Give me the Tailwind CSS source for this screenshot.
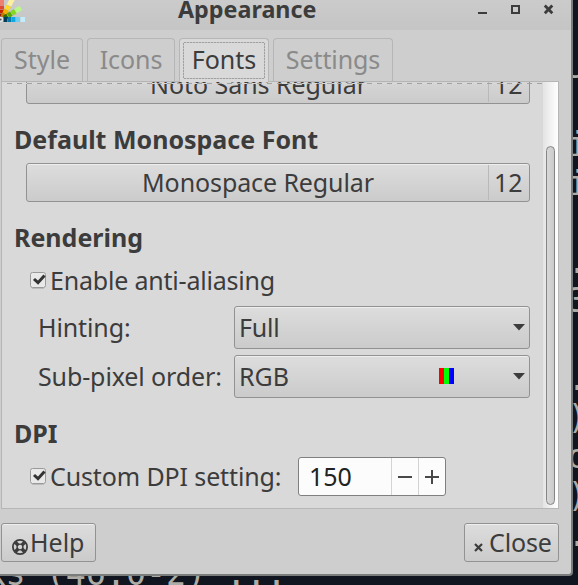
<!DOCTYPE html>
<html lang="en">
<head>
<meta charset="utf-8">
<title>Appearance</title>
<script src="https://cdn.jsdelivr.net/npm/@tailwindcss/browser@4"></script>
</head>
<body class="relative w-[578px] h-[585px] overflow-hidden bg-[#10151f] text-[#3c3c3c] text-[25px] leading-[34px] font-['Noto_Sans',sans-serif] whitespace-nowrap">

<!-- Terminal behind the window -->
<div class="absolute inset-0 overflow-hidden font-['DejaVu_Sans_Mono','Liberation_Mono',monospace] text-[#aeaca6] text-[33.33px] leading-[39px]">
  <div class="absolute left-[567.5px] top-[47px] whitespace-pre"><span class="inline-block align-top h-[39px] [clip-path:inset(50%_0_0_0)]">J</span>

i
i

.
3

.
)
o
)
.</div>
  <span class="absolute left-[-14.5px] top-[554px] whitespace-pre">ks (46.0-2) ...</span>
</div>

<!-- Window -->
<div class="relative flex flex-col w-[573px] h-[576px] bg-[#cecece] border-r-2 border-b-2 border-[#7b7c7c] rounded-br-[4px] overflow-hidden">
  <header class="relative flex shrink-0 h-[30px] bg-linear-to-b from-[#cbcbcb] to-[#c5c5c5]">
    <svg class="absolute left-0 top-0" width="26" height="24" viewBox="0 0 26 24">
      <g transform="translate(1.5 19.5)">
        <g transform="rotate(-90)"><path fill="#8c1a00" d="M3 -2.5h3v5h-3z"/><path fill="#c62000" d="M6.500 -2.5h3.500v5h-3.500z"/><path fill="#e24a30" d="M10.500 -2.5h3.500v5h-3.500z"/><path fill="#ee8070" d="M14.500 -2.5h6v5h-6z"/></g>
        <g transform="rotate(-62)"><path fill="#c88000" d="M3 -2.5h4v5h-4z"/><path fill="#f0b400" d="M7 -2.5h4v5h-4z"/><path fill="#ffd820" d="M11.500 -2.5h4v5h-4z"/><path fill="#fbf0a0" d="M16 -2.5h8v5h-8z"/></g>
        <g transform="rotate(-31)"><path fill="#2c7000" d="M3 -2.5h4v5h-4z"/><path fill="#58a800" d="M7.500 -2.5h4v5h-4z"/><path fill="#84d820" d="M12 -2.5h4v5h-4z"/><path fill="#b8f888" d="M16.500 -2.5h6v5h-6z"/></g>
        <path fill="#003c58" d="M2 -2.500h4v5h-4z"/><path fill="#0878a8" d="M6.500 -2.500h3.500v5h-3.500z"/><path fill="#10a8e0" d="M10.500 -2.500h3.500v5h-3.500z"/><path fill="#70ccf0" d="M14.500 -2.500h4v5h-4z"/><path fill="#c0ecfc" d="M19 -2.500h4.500v5h-4.500z"/>
        <circle r="2.400" cx="-.8" fill="#e8e8e8"/><circle r="1" cx="-.8" fill="#555"/>
      </g>
    </svg>
    <h1 class="ml-[178px] mt-[-8px] font-bold text-[23.3px]">Appearance</h1>
    <svg class="absolute left-[478px] top-0" width="76" height="20" viewBox="0 0 76 20" fill="none" stroke="#3c3c3c">
      <path stroke-width="2" d="M0 13h9M34 6h7v7h-7z"/>
      <path stroke-width="2.800" d="M66.800 5.500l7.500 7.800M74.300 5.500l-7.500 7.800"/>
    </svg>
  </header>

  <!-- Tabs -->
  <nav class="flex shrink-0 h-[51px] pt-[8px] pl-[1px] gap-[4px] text-[#8a8a8a]">
    <div class="w-[82px] border border-b-0 border-[#b6b6b6] rounded-t-[4px] text-center pt-[3px]">Style</div>
    <div class="w-[88px] border border-b-0 border-[#b6b6b6] rounded-t-[4px] text-center pt-[3px] tracking-[-0.1px]">Icons</div>
    <div class="relative z-10 w-[90px] h-[44px] bg-[#d9d9d9] border border-b-0 border-[#b6b6b6] rounded-t-[4px] px-[3px] pt-[3px]">
      <svg class="absolute left-[3px] top-[3px]" width="82" height="37"><rect x=".5" y=".5" width="81" height="36" rx="1" fill="none" stroke="#c4c4c4"/><path d="M1 .5h80M1 36.500h80M.5 1v35M81.500 1v35" fill="none" stroke="#a0a0a0" stroke-dasharray="2 1"/></svg>
      <div class="text-center text-[#3c3c3c]">Fonts</div>
    </div>
    <div class="w-[120px] border border-b-0 border-[#b6b6b6] rounded-t-[4px] text-center pt-[3px] tracking-[-0.1px]">Settings</div>
  </nav>

  <!-- Notebook page -->
  <main class="relative shrink-0 flex ml-[1px] w-[558px] h-[428px] bg-[#d9d9d9] border border-[#b6b6b6] overflow-hidden">
    <div class="flex flex-col w-[541px] h-[426px] mt-[-17px] pl-[12px] shrink-0">
      <div class="flex shrink-0 ml-[12px] w-[504px] h-[39px] rounded-[3px] border border-[#929292] bg-linear-to-b from-[#dddddd] to-[#cbcbcb] p-px">
        <span class="grow text-center pl-[1px] tracking-[-0.05px]">Noto Sans Regular</span>
        <span class="w-[40px] border-l border-[#b9b9b9] pl-[5px]">12</span>
      </div>
      <h2 class="font-bold mt-[18px]">Default Monospace Font</h2>
      <div class="flex shrink-0 mt-[7px] ml-[12px] w-[504px] h-[39px] rounded-[3px] border border-[#929292] bg-linear-to-b from-[#dddddd] to-[#cbcbcb] shadow-[inset_0_1px_0_#eeeeee] p-px">
        <span class="grow text-center tracking-[-0.1px]">Monospace Regular</span>
        <span class="w-[40px] border-l border-[#b9b9b9] pl-[5px]">12</span>
      </div>
      <h2 class="font-bold mt-[18px]">Rendering</h2>
      <div class="flex mt-[9px] ml-[16px] h-[34px]">
        <svg class="mt-[9px] mr-[4px] shrink-0" width="16" height="17" viewBox="0 0 16 17">
          <rect x=".5" y=".5" width="15" height="15" rx="2" fill="#e9e9e9" stroke="#9a9a9a"/><path d="M2 16.500h12" stroke="#bcbcbc"/>
          <path d="M4 7l4 3.700L14.500 3.500" fill="none" stroke="#333" stroke-width="3"/>
        </svg>
        <span class="tracking-[-0.2px]">Enable anti-aliasing</span>
      </div>
      <div class="flex mt-[9px] ml-[24px] h-[43px]">
        <span class="w-[196px] pt-[4px] tracking-[-0.12px]">Hinting:</span>
        <div class="flex w-[296px] h-[43px] rounded-[3px] border border-[#929292] bg-linear-to-b from-[#dddddd] to-[#cbcbcb] shadow-[inset_0_1px_0_#eeeeee] pl-[4px] pt-[3px]">
          <span class="grow tracking-[-0.2px]">Full</span>
          <svg class="mt-[14px] mr-[4px]" width="12" height="7"><path d="M0 0h12L6 6.500z" fill="#3c3c3c"/></svg>
        </div>
      </div>
      <div class="flex mt-[6px] ml-[24px] h-[43px]">
        <span class="w-[196px] pt-[4px] tracking-[-0.12px]">Sub-pixel order:</span>
        <div class="flex w-[296px] h-[43px] rounded-[3px] border border-[#929292] bg-linear-to-b from-[#dddddd] to-[#cbcbcb] shadow-[inset_0_1px_0_#eeeeee] pl-[4px] pt-[3px]">
          <span class="w-[200px]">RGB</span>
          <div class="flex w-[15px] h-[16px] mt-[9px]"><i class="w-[5px] bg-[#ff0000]"></i><i class="w-[5px] bg-[#00ff00]"></i><i class="w-[5px] bg-[#0000ff]"></i></div>
          <svg class="mt-[14px] ml-auto mr-[4px]" width="12" height="7"><path d="M0 0h12L6 6.500z" fill="#3c3c3c"/></svg>
        </div>
      </div>
      <h2 class="font-bold mt-[18px]">DPI</h2>
      <div class="flex mt-[7px] ml-[16px] h-[39px]">
        <svg class="mt-[11px] mr-[4px] shrink-0" width="16" height="17" viewBox="0 0 16 17">
          <rect x=".5" y=".5" width="15" height="15" rx="2" fill="#e9e9e9" stroke="#9a9a9a"/><path d="M2 16.500h12" stroke="#bcbcbc"/>
          <path d="M4 7l4 3.700L14.500 3.500" fill="none" stroke="#333" stroke-width="3"/>
        </svg>
        <span class="w-[248px] pt-[2px] tracking-[-0.12px]">Custom DPI setting:</span>
        <div class="flex w-[148px] h-[39px] rounded-[3px] border border-[#808080] bg-[#fcfcfc] text-[#222]">
          <span class="w-[92px] pl-[10px] pt-[1px]">150</span>
          <span class="w-[27px] border-l border-[#d4d4d4] grid place-items-center"><svg width="14" height="14"><path d="M0 7h14" stroke="#484848" stroke-width="2"/></svg></span>
          <span class="w-[27px] border-l border-[#d4d4d4] grid place-items-center"><svg width="14" height="14"><path d="M0 7h14M7 0v14" stroke="#484848" stroke-width="2"/></svg></span>
        </div>
      </div>
    </div>
    <!-- Scrollbar -->
    <div class="shrink-0 w-[15px] pl-[3px] pt-[64px] bg-linear-to-r from-[#e4e4e4] to-white">
      <div class="w-[9px] h-[359px] rounded-full border border-[#858585] bg-linear-to-r from-[#d8d8d8] to-[#cbcbcb]"></div>
    </div>
    <!-- Overflow hint along the clipped top edge -->
    <svg class="absolute left-0 top-0" width="541" height="2"><path d="M0 1.500h541" stroke="#d9d9d9"/><path d="M5 1.500h536" stroke="#a2a2a2" stroke-dasharray="5 5"/></svg>
  </main>

  <!-- Actions -->
  <footer class="flex justify-between mt-[14px] ml-[1px] w-[558px]">
    <button class="flex w-[95px] h-[39px] rounded-[3px] border border-[#929292] bg-linear-to-b from-[#dddddd] to-[#cbcbcb] shadow-[inset_0_1px_0_#eeeeee] pl-[10px] pt-[1px]">
      <svg class="mt-[14px] mr-[2px] shrink-0" width="16" height="16" viewBox="0 0 16 16" fill="none" stroke="#3c3c3c">
        <circle cx="8" cy="8" r="7.100" stroke-width="1.800"/><circle cx="8" cy="8" r="2.900" stroke-width="1.400"/>
        <path stroke-width="3.400" d="M3.300 3.300l2.700 2.700M12.700 3.300l-2.700 2.700M3.300 12.700l2.700 -2.700M12.700 12.700l-2.700 -2.700"/>
      </svg>
      <span>Help</span>
    </button>
    <button class="flex w-[95px] h-[39px] rounded-[3px] border border-[#929292] bg-linear-to-b from-[#dddddd] to-[#cbcbcb] shadow-[inset_0_1px_0_#eeeeee] pl-[9px] pt-[1px]">
      <svg class="mt-[18px] mr-[6px] shrink-0" width="9" height="9"><path d="M1 1l7 7M8 1l-7 7" stroke="#3c3c3c" stroke-width="2.200"/></svg>
      <span class="tracking-[-0.12px]">Close</span>
    </button>
  </footer>
</div>
</body>
</html>
